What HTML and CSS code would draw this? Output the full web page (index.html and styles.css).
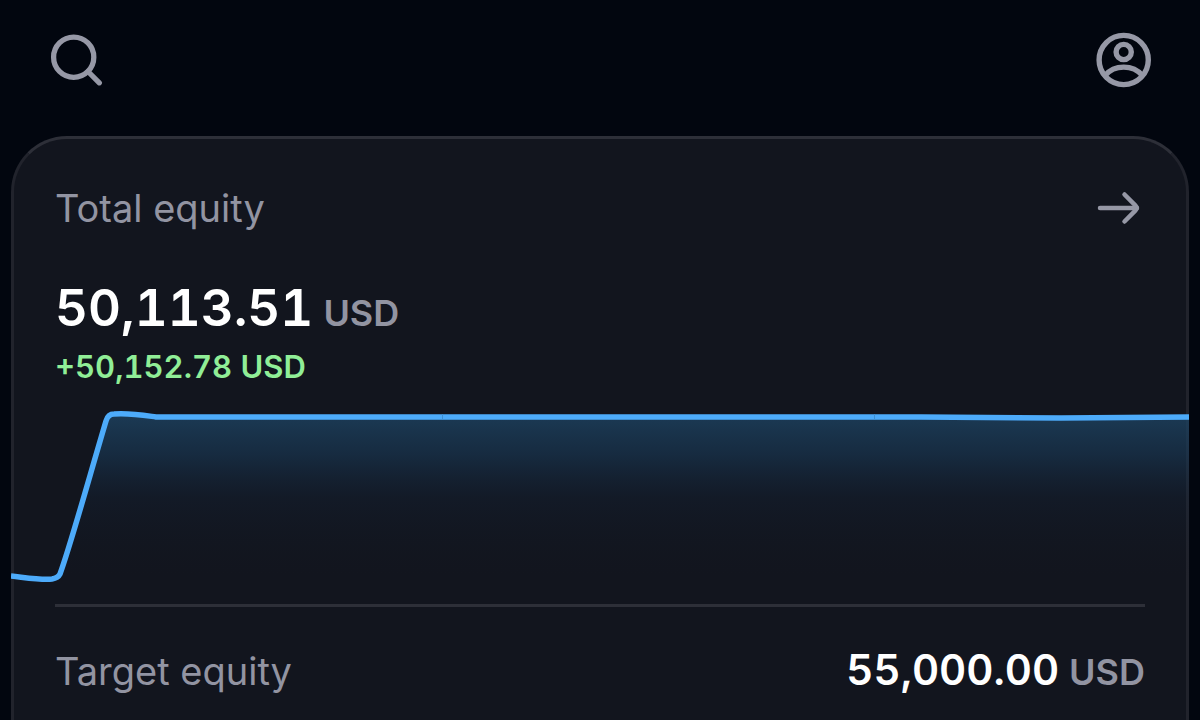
FILE: index.html
```html
<!DOCTYPE html>
<html lang="en">
<head>
  <meta charset="UTF-8">
  <meta name="viewport" content="width=device-width, initial-scale=1.0">
  <title>Total equity</title>
  <link rel="stylesheet" href="styles.css">
</head>
<body>
  <header class="topbar">
    <button class="icon-button" type="button" aria-label="Search">
      <svg width="56" height="56" viewBox="0 0 56 56" fill="none" stroke="currentColor" stroke-width="5.3" stroke-linecap="round">
        <circle cx="25.7" cy="25.2" r="20.1"/>
        <path d="M40 39.5L51.3 50.8"/>
      </svg>
    </button>
    <button class="icon-button" type="button" aria-label="Account">
      <svg width="56" height="56" viewBox="0 0 56 56" fill="none" stroke="currentColor" stroke-width="5.4">
        <circle cx="27.7" cy="28" r="24.6"/>
        <circle cx="27.7" cy="20" r="7.6"/>
        <path d="M9 43.5C18.5 32.3 36.9 32.3 46.4 43.5"/>
      </svg>
    </button>
  </header>

  <main class="equity-card">
    <div class="card-header">
      <h1 class="label">Total equity</h1>
      <button class="icon-button" type="button" aria-label="Open total equity">
        <svg width="48" height="40" viewBox="0 0 48 40" fill="none" stroke="currentColor" stroke-width="4.5" stroke-linecap="round" stroke-linejoin="round">
          <path d="M3 20H40"/>
          <path d="M27.5 6.5L38.3 17.3Q41 20 38.3 22.7L27.5 33.5"/>
        </svg>
      </button>
    </div>

    <p class="amount balance">50,113.51<span class="currency">USD</span></p>
    <p class="change">+50,152.78 USD</p>

    <svg class="chart" viewBox="0 0 1178 190" preserveAspectRatio="none" role="img" aria-label="Equity over time">
      <defs>
        <linearGradient id="fill" gradientUnits="userSpaceOnUse" x1="0" y1="16" x2="0" y2="186">
          <stop offset="0" stop-color="#1e4564" stop-opacity="0.8"/>
          <stop offset="0.25" stop-color="#1a3d5c" stop-opacity="0.55"/>
          <stop offset="0.5" stop-color="#16304c" stop-opacity="0.2"/>
          <stop offset="1" stop-color="#12151e" stop-opacity="0"/>
        </linearGradient>
      </defs>
      <path fill="url(#fill)" d="M0 180C18 182 30 184 41 183Q47 182 49 178C60 148 80 75 95 25Q97 18 103 18C120 17 131 19 145 21H910L1050 22L1178 21V190H0Z"/>
      <path class="chart-line" d="M0 180C18 182 30 184 41 183Q47 182 49 178C60 148 80 75 95 25Q97 18 103 18C120 17 131 19 145 21H910C960 21 1010 22 1050 22S1130 21 1178 21"/>
      <path class="chart-seam" d="M431.5 18V24M863.5 18V24"/>
    </svg>

    <div class="target-row">
      <h2 class="label">Target equity</h2>
      <p class="amount target">55,000.00<span class="currency">USD</span></p>
    </div>
  </main>
</body>
</html>
```

FILE: styles.css
```css
* { margin: 0; padding: 0; box-sizing: border-box; }
body {
  display: flex;
  flex-direction: column;
  min-height: 100vh;
  background-color: #02060f;
  color: #fff;
  font-family: Inter, "Liberation Sans", sans-serif;
}
.topbar {
  display: flex;
  justify-content: space-between;
  padding: 32px 48px 48px;
}
.icon-button {
  display: block;
  border: none;
  background: none;
  color: #9698a6;
  cursor: pointer;
}
.icon-button svg {
  display: block;
}
.equity-card {
  flex: 1;
  margin: 0 11px;
  padding: 0 41px;
  background-color: #12151e;
  border: 3px solid #21232c;
  border-top-color: #2d2f38;
  border-bottom: none;
  border-radius: 56px 56px 0 0;
}
.card-header {
  display: flex;
  justify-content: space-between;
  align-items: center;
  padding-top: 47px;
}
.label {
  font-size: 38px;
  line-height: 44px;
  font-weight: 400;
  color: #9294a2;
}
.amount {
  display: flex;
  align-items: baseline;
  gap: 10px;
  font-weight: 600;
  font-feature-settings: "tnum";
}
.balance {
  margin-top: 44px;
  font-size: 51px;
  line-height: 68px;
}
.currency {
  font-size: 36px;
  font-weight: 600;
  color: #9294a2;
}
.change {
  font-size: 31px;
  line-height: 40px;
  font-weight: 600;
  font-feature-settings: "tnum";
  color: #90ee97;
}
.chart {
  display: block;
  width: calc(100% + 88px);
  height: 190px;
  margin: 9px -44px 18px;
}
.chart-line {
  fill: none;
  stroke: #4dabfa;
  stroke-width: 5.5;
}
.chart-seam {
  stroke: #3f8fd2;
  stroke-width: 1;
}
.target-row {
  display: flex;
  justify-content: space-between;
  align-items: center;
  padding: 35px 0;
  border-top: 3px solid #2d2f38;
}
.target {
  font-size: 42px;
  line-height: 56px;
}
```
